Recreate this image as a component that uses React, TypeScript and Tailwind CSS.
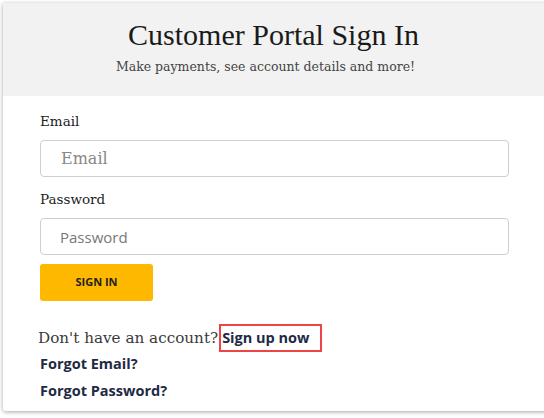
export default function App() {
  return (
    <div className="min-h-[418px] w-[544px] overflow-hidden bg-white pl-[3px] pt-[3px]">
      <div className="w-[560px] rounded-b-[3px] bg-white shadow-[0_1px_4px_rgba(0,0,0,0.35)]">
        {/* header */}
        <div className="flex h-[93px] w-[541px] flex-col items-center bg-[#f2f2f2] pt-[14px]">
          <h1 className="text-[30px] leading-[36px] text-[#1a1a1a] [font-family:'Liberation_Serif',serif]">
            Customer Portal Sign In
          </h1>
          <p className="mr-[16px] mt-[5px] text-[12.5px] text-[#444] [font-family:'DejaVu_Serif',serif]">
            Make payments, see account details and more!
          </p>
        </div>

        <form className="flex w-[541px] flex-col px-[37px] pb-[10px] pt-[16px]">
          <label className="text-[13.5px] leading-[19px] font-medium text-[#222] [font-family:'DejaVu_Serif',serif]">Email</label>
          <input
            className="mt-[9px] h-[37px] w-[469px] rounded-[4px] border border-[#cfcfcf] px-[20px] text-[16px] text-[#333] outline-none placeholder:text-[#888] [font-family:'DejaVu_Serif',serif]"
            placeholder="Email"
            type="email"
          />
          <label className="mt-[13px] text-[13.5px] leading-[19px] font-medium text-[#222] [font-family:'DejaVu_Serif',serif]">Password</label>
          <input
            className="mt-[9px] h-[37px] w-[469px] rounded-[4px] border border-[#cfcfcf] px-[19px] text-[15px] text-[#333] outline-none placeholder:text-[#777] [font-family:'Open_Sans',sans-serif]"
            placeholder="Password"
            type="password"
          />
          <button
            type="button"
            className="mt-[9px] h-[37px] w-[113px] rounded-[3px] bg-[#ffb800] text-[11px] font-bold text-[#222] [font-family:'Open_Sans',sans-serif]"
          >
            SIGN IN
          </button>

          <div className="mt-[23px] flex items-center">
            <span className="ml-[-2px] text-[15.2px] text-[#3a3a3a] [font-family:'DejaVu_Serif',serif]">Don't have an account?</span>
            <a className="ml-[1px] border-2 border-[#ef4444] py-[2px] pl-[1px] pr-[11px] text-[14.5px] leading-[20px] font-bold text-[#1f2a44] [font-family:'Open_Sans',sans-serif]">
              Sign up now
            </a>
          </div>
          <a className="mt-[2px] text-[14.5px] leading-[20px] font-bold text-[#1f2a44] [font-family:'Open_Sans',sans-serif]">Forgot Email?</a>
          <a className="mt-[7px] text-[14.5px] leading-[20px] font-bold text-[#1f2a44] [font-family:'Open_Sans',sans-serif]">Forgot Password?</a>
        </form>
      </div>
    </div>
  );
}
